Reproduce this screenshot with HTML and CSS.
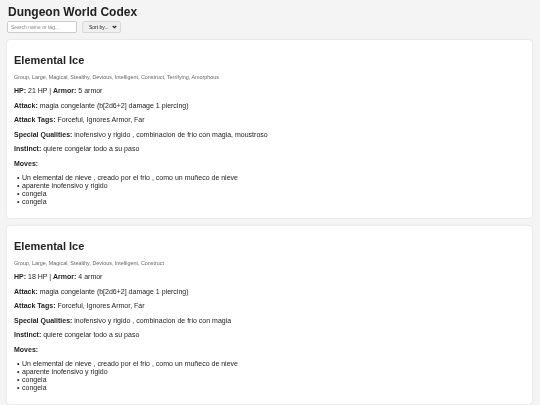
FILE: index.html
```html
<!DOCTYPE html>
<html>
<head>
<meta charset="utf-8">
<title>Dungeon World Codex</title>
<link rel="stylesheet" href="styles.css">
</head>
<body>
<header class="top">
  <h1 class="site-title">Dungeon World Codex</h1>
  <div class="controls">
    <input class="search" type="text" placeholder="Search name or tag...">
    <div class="sort-wrap">
      <select class="sort"><option>Sort by...</option></select>
      <svg class="chev" width="5" height="4" viewBox="0 0 10 8"><path d="M1.5 2 L5 5.5 L8.5 2" fill="none" stroke="#222" stroke-width="2.2"/></svg>
    </div>
  </div>
</header>
<main class="list">
  <section class="card">
    <h2 class="name">Elemental Ice</h2>
    <p class="tags">Group, Large, Magical, Stealthy, Devious, Intelligent, Construct, Terrifying, Amorphous</p>
    <p><b>HP:</b> 21 HP | <b>Armor:</b> 5 armor</p>
    <p><b>Attack:</b> magia congelante (b[2d6+2] damage 1 piercing)</p>
    <p><b>Attack Tags:</b> Forceful, Ignores Armor, Far</p>
    <p><b>Special Qualities:</b> inofensivo y rigido , combinacion de frio con magia, moustroso</p>
    <p><b>Instinct:</b> quiere congelar todo a su paso</p>
    <p><b>Moves:</b></p>
    <ul class="moves">
      <li>Un elemental de nieve , creado por el frio , como un muñeco de nieve</li>
      <li>aparente inofensivo y rigido</li>
      <li>congela</li>
      <li>congela</li>
    </ul>
  </section>
  <section class="card">
    <h2 class="name">Elemental Ice</h2>
    <p class="tags">Group, Large, Magical, Stealthy, Devious, Intelligent, Construct</p>
    <p><b>HP:</b> 18 HP | <b>Armor:</b> 4 armor</p>
    <p><b>Attack:</b> magia congelante (b[2d6+2] damage 1 piercing)</p>
    <p><b>Attack Tags:</b> Forceful, Ignores Armor, Far</p>
    <p><b>Special Qualities:</b> inofensivo y rigido , combinacion de frio con magia</p>
    <p><b>Instinct:</b> quiere congelar todo a su paso</p>
    <p><b>Moves:</b></p>
    <ul class="moves">
      <li>Un elemental de nieve , creado por el frio , como un muñeco de nieve</li>
      <li>aparente inofensivo y rigido</li>
      <li>congela</li>
      <li>congela</li>
    </ul>
  </section>
</main>
</body>
</html>
```
FILE: styles.css
```css
html, body {
  background: #f4f4f4;
}
body {
  margin: 0;
  padding: 5px 8px 8px;
  font-family: "Liberation Sans", Arial, sans-serif;
  font-size: 7px;
  line-height: 8px;
  color: #222;
  -webkit-font-smoothing: antialiased;
}
.top, .list {
  will-change: opacity;
}
.site-title {
  margin: 0;
  font-size: 12px;
  line-height: 15px;
  font-weight: bold;
  color: #222;
}
.controls {
  display: flex;
  gap: 5px;
  margin-top: 1px;
  margin-bottom: 7px;
}
.search {
  box-sizing: border-box;
  width: 70px;
  height: 12px;
  padding: 0 3px;
  border: 1px solid #ccc;
  border-radius: 2px;
  background: #fff;
  font-family: "Liberation Sans", Arial, sans-serif;
  font-size: 5px;
  margin-left: -1px;
}
.search::placeholder {
  color: #888;
}
.sort-wrap {
  position: relative;
  width: 39px;
  height: 12px;
}
.sort {
  -webkit-appearance: none;
  appearance: none;
  box-sizing: border-box;
  width: 39px;
  height: 12px;
  padding: 0 2px 0 6px;
  border: 1px solid #d8d8d8;
  border-radius: 2px;
  background: #efefef;
  font-family: "Liberation Sans", Arial, sans-serif;
  font-size: 5px;
  color: #222;
  outline: none;
}
.chev {
  position: absolute;
  right: 4px;
  top: 4px;
  pointer-events: none;
}
.list {
  display: flex;
  flex-direction: column;
  gap: 8px;
}
.card {
  background: #fff;
  border-radius: 3px;
  box-shadow: 0 0 2px rgba(0, 0, 0, 0.14);
  padding: 8px 7px 7px;
  margin-left: -1px;
}
.name {
  margin: 5.5px 0 7px;
  font-size: 11px;
  line-height: 13px;
  font-weight: bold;
  color: #222;
}
.card p {
  margin: 6.5px 0;
}
.card p.tags {
  font-size: 5.4px;
  line-height: 7px;
  color: #666;
  margin-top: 7px;
}
.moves {
  margin: 6px 0 5px;
  padding-left: 8px;
  list-style: none;
}
.moves li::before {
  content: "•";
  display: inline-block;
  width: 5px;
  margin-left: -5px;
}
```
